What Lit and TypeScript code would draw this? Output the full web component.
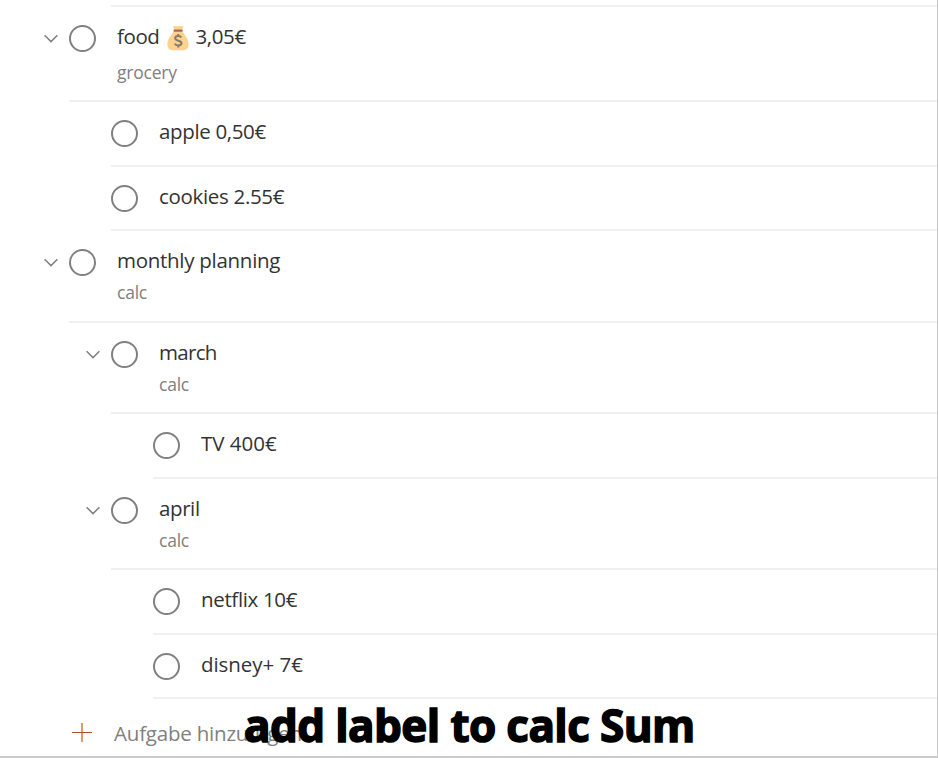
import { LitElement, html, css, svg, nothing } from "lit";
import { customElement, property } from "lit/decorators.js";
import { styleMap } from "lit/directives/style-map.js";

interface Task {
  level: number;
  height: number;
  title: string;
  tracking: number;
  amount?: string;
  bag?: boolean;
  label?: string;
}

const TASKS: Task[] = [
  { level: 0, height: 95, title: "food", tracking: -0.4, bag: true, amount: "3,05€", label: "grocery" },
  { level: 1, height: 65, title: "apple 0,50€", tracking: -0.35 },
  { level: 1, height: 64, title: "cookies 2.55€", tracking: -0.32 },
  { level: 0, height: 92, title: "monthly planning", tracking: -0.28, label: "calc" },
  { level: 1, height: 91, title: "march", tracking: -0.7, label: "calc" },
  { level: 2, height: 65, title: "TV 400€", tracking: 0 },
  { level: 1, height: 91, title: "april", tracking: -0.4, label: "calc" },
  { level: 2, height: 65, title: "netflix 10€", tracking: -0.35 },
  { level: 2, height: 64, title: "disney+ 7€", tracking: -0.05 },
];

const moneyBag = svg`
  <path d="M7 0.3h10.5l-1.3 3.4H8.4z" fill="#fbd08a"/>
  <path d="M7.6 5.6h9c2.4 3.8 6 7.700 6 13 0 3.600-2 5.700-5 5.700H6.400c-3 0-5-2.100-5-5.700 0-5.300 3.800-9.200 6.200-13z" fill="#fed28c"/>
  <rect x="7.600" y="3.400" width="9" height="2.400" rx="0.600" fill="#a56a49"/>
  <path d="M15.300 11.500c-.6-1-1.700-1.400-3.100-1.400-1.800 0-3 .8-3 2.200 0 3.300 6.300 1.500 6.300 4.800 0 1.500-1.300 2.400-3.200 2.400-1.700 0-2.900-.6-3.500-1.900M12.200 8v2.200M12.200 19.400v2.200" fill="none" stroke="#857c6d" stroke-width="2"/>`;

@customElement("task-row")
export class TaskRow extends LitElement {
  @property({ attribute: false }) task!: Task;

  static styles = css`
    :host { display: block; }
    .row {
      box-sizing: border-box;
      display: flex;
      align-items: flex-start;
      border-bottom: 2px solid #f0f0f0;
      padding-top: 18px;
    }
    .ring {
      flex: none;
      box-sizing: border-box;
      width: 27px;
      height: 27px;
      border: 2px solid #808080;
      border-radius: 50%;
    }
    .chevron { flex: none; width: 14px; height: 9px; margin: 9px 11px 0 -25px; }
    .text { margin: -4px 0 0 21px; white-space: nowrap; }
    .title {
      display: flex;
      height: 30px;
      line-height: 30px;
      font-size: 20.5px;
      color: #333;
    }
    .bag { width: 24px; height: 25px; margin: 5px 6px 0 6px; }
    .label {
      margin-top: 5px;
      height: 24px;
      font-size: 17.5px;
      line-height: 24px;
      letter-spacing: -0.22px;
      color: #808080;
    }
    .below-bag { margin-top: 9px; }
  `;

  render() {
    const t = this.task;
    return html`<div class="row" style=${styleMap({ height: `${t.height}px`, marginLeft: `${69 + t.level * 42}px` })}>
      ${t.label
        ? html`<svg class="chevron" viewBox="0 0 14 9"><path d="M.6 1.200 7 7.600l6.400-6.400" fill="none" stroke="#808080" stroke-width="1.500"/></svg>`
        : nothing}
      <div class="ring"></div>
      <div class="text">
        <div class="title" style=${styleMap({ letterSpacing: `${t.tracking}px` })}><span>${t.title}</span>${t.bag
          ? html`<svg class="bag" viewBox="0 0 24 25">${moneyBag}</svg><span>${t.amount}</span>`
          : nothing}</div>
        ${t.label ? html`<div class="label ${t.bag ? "below-bag" : ""}">${t.label}</div>` : nothing}
      </div>
    </div>`;
  }
}

@customElement("app-root")
export class AppRoot extends LitElement {
  static styles = css`
    :host {
      display: block;
      position: relative;
      box-sizing: border-box;
      width: 938px;
      height: 758px;
      overflow: hidden;
      background: #fff;
      border-right: 1px solid #cacaca;
      border-bottom: 2px solid #cacaca;
      font-family: "Open Sans", "Noto Sans", sans-serif;
    }
    .first-line { height: 2px; margin: 5px 0 0 111px; background: #f0f0f0; }
    .add { display: flex; align-items: flex-start; padding-left: 72px; white-space: nowrap; }
    .plus { width: 20px; height: 20px; margin-top: 24px; }
    .add-text {
      margin: 19px 0 0 22px;
      font-size: 20.5px;
      line-height: 30px;
      letter-spacing: -0.2px;
      color: #808080;
    }
    .caption {
      position: absolute;
      left: 244px;
      top: 694px;
      font-size: 44px;
      line-height: 62px;
      font-weight: 700;
      -webkit-text-stroke: 1.5px #000;
      letter-spacing: -0.6px;
      color: #000;
      white-space: nowrap;
    }
  `;

  render() {
    return html`
      <div class="first-line"></div>
      ${TASKS.map((t) => html`<task-row .task=${t}></task-row>`)}
      <div class="add">
        <svg class="plus" viewBox="0 0 20 20"><path d="M10 0v19" stroke="#e09a62" stroke-width="2"/><path d="M0 9.500h20" stroke="#a94f2b" stroke-width="1"/></svg>
        <span class="add-text">Aufgabe hinzufügen</span>
      </div>
      <div class="caption">add label to calc Sum</div>`;
  }
}
